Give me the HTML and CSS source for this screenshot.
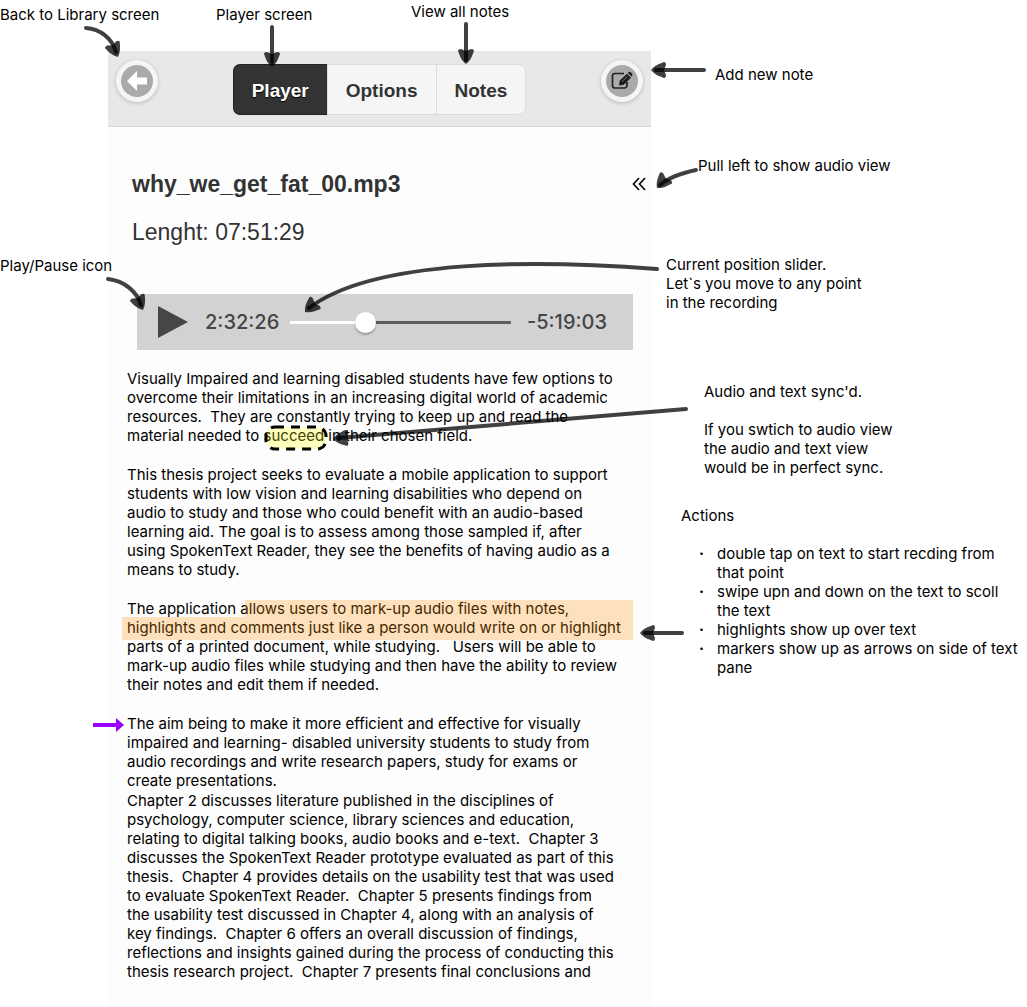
FILE: index.html
```html
<!DOCTYPE html>
<html lang="en">
<head>
<meta charset="utf-8">
<title>SpokenText Reader – Player</title>
<link rel="stylesheet" href="styles.css">
</head>
<body>
<div class="sheet">
  <div class="top-notes">
    <p class="top-note">Back to Library screen</p>
    <p class="top-note">Player screen</p>
    <p class="top-note top-note-high">View all notes</p>
  </div>

  <div class="board">
    <aside class="left-notes"><p>Play/Pause icon</p></aside>

    <main class="panel">
      <header class="bar">
        <button class="round" type="button" aria-label="Back to Library">
          <svg width="32" height="32" viewBox="0 0 32 32"><circle cx="16" cy="16" r="16" fill="#aaa"/><path d="M6 16 16 6v6.500h10v7H16V26z" fill="#fff"/></svg>
        </button>
        <nav class="tabs">
          <button class="tab tab-active" type="button">Player</button>
          <button class="tab" type="button">Options</button>
          <button class="tab" type="button">Notes</button>
        </nav>
        <button class="round" type="button" aria-label="Add new note">
          <svg width="32" height="32" viewBox="0 0 32 32"><circle cx="16" cy="16" r="16" fill="#aaa"/><path d="M18 8.500H9a2.500 2.500 0 0 0-2.500 2.500v9.500A2.500 2.500 0 0 0 9 23h9.500a2.500 2.500 0 0 0 2.500-2.500V17" fill="none" stroke="#222" stroke-width="1.700"/><path d="M13 20.500l.8-5L21 8.800l4 4-7.200 6.900zM21.800 8l1-.9q1-.6 1.900.2l1.500 1.500q.7 1 0 1.800l-.8.900z" fill="#1c1c1c"/><path d="M16 16.500l5.500-5" stroke="#888" stroke-width=".8"/></svg>
        </button>
      </header>

      <section class="file">
        <div class="file-row">
          <h1>why_we_get_fat_00.mp3</h1>
          <button class="pull" type="button" aria-label="Show audio view">
            <svg width="14" height="14" viewBox="0 0 14 14" fill="none" stroke="#000" stroke-width="1.600"><path d="M7 1 1.500 7 7 13M13 1 7.500 7l5.500 6"/></svg>
          </button>
        </div>
        <p class="length">Lenght: 07:51:29</p>
      </section>

      <section class="audio">
        <button class="play" type="button" aria-label="Play">
          <svg width="30" height="32" viewBox="0 0 30 32"><path d="M0 0 30 16 0 32z" fill="#464646"/></svg>
        </button>
        <span class="time">2:32:26</span>
        <input class="seek" type="range" min="0" max="1000" value="322" aria-label="Current position">
        <span class="time">-5:19:03</span>
      </section>

      <article class="text">
        <p>Visually Impaired and learning disabled students have few options to<br>
        overcome their limitations in an increasing digital world of academic<br>
        resources.&nbsp; They are constantly trying to keep up and read the<br>
        material needed to <span class="word">succeed<svg class="ring" width="64" height="26" viewBox="0 0 64 26"><rect x="2" y="2" width="60" height="22" rx="9" fill="#ff0" fill-opacity=".25" stroke="#000" stroke-width="3" stroke-dasharray="9 7"/></svg></span> in their chosen field.</p>
        <p>This thesis project seeks to evaluate a mobile application to support<br>
        students with low vision and learning disabilities who depend on<br>
        audio to study and those who could benefit with an audio-based<br>
        learning aid. The goal is to assess among those sampled if, after<br>
        using SpokenText Reader, they see the benefits of having audio as a<br>
        means to study.</p>
        <p class="marked">The application allows users to mark-up audio files with notes,<br>
        highlights and comments just like a person would write on or highlight<br>
        parts of a printed document, while studying.&nbsp;&nbsp; Users will be able to<br>
        mark-up audio files while studying and then have the ability to review<br>
        their notes and edit them if needed.</p>
        <p class="flagged"><svg class="flag" width="31" height="14" viewBox="0 0 31 14"><path d="M0 5h23V0l8 7-8 7V9H0z" fill="#90f"/></svg>The aim being to make it more efficient and effective for visually<br>
        impaired and learning- disabled university students to study from<br>
        audio recordings and write research papers, study for exams or<br>
        create presentations.</p>
        <p class="next">Chapter 2 discusses literature published in the disciplines of<br>
        psychology, computer science, library sciences and education,<br>
        relating to digital talking books, audio books and e-text.&nbsp; Chapter 3<br>
        discusses the SpokenText Reader prototype evaluated as part of this<br>
        thesis.&nbsp; Chapter 4 provides details on the usability test that was used<br>
        to evaluate SpokenText Reader.&nbsp; Chapter 5 presents findings from<br>
        the usability test discussed in Chapter 4, along with an analysis of<br>
        key findings.&nbsp; Chapter 6 offers an overall discussion of findings,<br>
        reflections and insights gained during the process of conducting this<br>
        thesis research project.&nbsp; Chapter 7 presents final conclusions and</p>
      </article>
    </main>

    <aside class="right-notes">
      <p class="note-add">Add new note</p>
      <p class="note-pull">Pull left to show audio view</p>
      <p class="note-slider">Current position slider.<br>Let`s you move to any point<br>in the recording</p>
      <div class="note-sync">
        <p>Audio and text sync'd.</p>
        <p>If you swtich to audio view<br>the audio and text view<br>would be in perfect sync.</p>
      </div>
      <div class="note-actions">
        <p>Actions</p>
        <ul>
          <li>double tap on text to start recding from<br>that point</li>
          <li>swipe upn and down on the text to scoll<br>the text</li>
          <li>highlights show up over text</li>
          <li>markers show up as arrows on side of text<br>pane</li>
        </ul>
      </div>
    </aside>
  </div>

  <svg class="arrows" width="1027" height="700" viewBox="0 0 1027 700" aria-hidden="true">
    <defs><path id="head" d="M0 0C-4-5-8-6-13-8q-2 0-2 3l2 5-2 5q0 3 2 3C-8 6-4 5 0 0z"/></defs>
    <g fill="none" stroke="#000" stroke-opacity=".75" stroke-width="4" stroke-linecap="round">
      <path d="M86 28C100 29 112 38 116 52"/>
      <path d="M272 27V62"/>
      <path d="M466 24V60"/>
      <path d="M704 70H656"/>
      <path d="M696 170C682 173 668 178 660 185"/>
      <path d="M108 279C125 281 137 292 141 305"/>
      <path d="M657 269C540 260 375 258 309 308"/>
      <path d="M686 409 338 438"/>
      <path d="M682 633H645"/>
    </g>
    <g fill="#000" fill-opacity=".75">
      <use href="#head" transform="translate(118 57) rotate(65)"/>
      <use href="#head" transform="translate(272 67) rotate(90)"/>
      <use href="#head" transform="translate(466 64) rotate(90)"/>
      <use href="#head" transform="translate(651 70) rotate(180)"/>
      <use href="#head" transform="translate(657 188) rotate(132)"/>
      <use href="#head" transform="translate(143 310) rotate(65)"/>
      <use href="#head" transform="translate(305 312) rotate(138)"/>
      <use href="#head" transform="translate(333 439) rotate(175)"/>
      <use href="#head" transform="translate(640 633) rotate(180)"/>
    </g>
  </svg>
</div>
</body>
</html>
```
FILE: styles.css
```css
* { box-sizing: border-box; }

body {
  margin: 0;
  background: #fff;
  color: #000;
  font: 15px/19px Inter, "Open Sans", sans-serif;
}

p, h1, ul { margin: 0; padding: 0; }

button {
  margin: 0;
  padding: 0;
  border: 0;
  background: none;
  font: inherit;
  color: inherit;
}

svg { display: block; }

.sheet {
  position: relative;
  display: flex;
  flex-direction: column;
  min-height: 100vh;
  overflow: hidden;
}

.top-notes {
  display: grid;
  grid-template-columns: 216px 195px 1fr;
  height: 51px;
  padding-top: 5px;
}

.top-note-high { margin-top: -3px; }

.board {
  display: grid;
  grid-template-columns: 108px minmax(0, 543fr) minmax(0, 376fr);
  flex: 1;
}

.left-notes {
  z-index: 1;
  padding-top: 205px;
  white-space: nowrap;
}

.panel {
  background: #fdfdfd;
  padding-bottom: 24px;
}

.bar {
  display: flex;
  align-items: flex-start;
  justify-content: space-between;
  height: 76px;
  padding: 9px 8px;
  background: #e8e8e8;
  border-bottom: 1px solid #d8d8d8;
}

.round {
  padding: 4px;
  border: 1px solid #f5f5f5;
  border-radius: 50%;
  background: #f5f5f5;
  box-shadow: 0 1px 4px rgba(0, 0, 0, .2);
}

.tabs {
  display: flex;
  margin-top: 4px;
  border-radius: 7px;
}

.tab {
  height: 51px;
  padding: 0 18px;
  border: 1px solid #dcdcdc;
  border-right-width: 0;
  background: #f5f5f5;
  color: #333;
  font: bold 19px/51px "Liberation Sans", Arial, sans-serif;
  text-shadow: 0 1px 0 #f3f3f3;
}

.tab:last-child {
  border-right-width: 1px;
  border-radius: 0 7px 7px 0;
}

.tab-active {
  border-color: #222;
  border-radius: 7px 0 0 7px;
  background: #333;
  color: #fff;
  text-shadow: 0 1px 1px #000;
}

.file {
  padding: 43px 5px 0 24px;
  color: #333;
  font: 23px/28px "Liberation Sans", Arial, sans-serif;
}

.file-row {
  display: flex;
  align-items: center;
  justify-content: space-between;
}

.file h1 { font: inherit; font-weight: bold; }

.length { margin-top: 20px; }

.audio {
  display: flex;
  align-items: center;
  height: 56px;
  margin: 48px 18px 0 29px;
  padding: 0 26px 0 21px;
  background: #d2d2d2;
}

.time {
  color: #464646;
  font: 500 20px/24px Inter, sans-serif;
}

.play { margin-right: 17px; }

.seek {
  flex: 1;
  min-width: 0;
  height: 24px;
  margin: 0 16px 0 11px;
  appearance: none;
  background: linear-gradient(90deg, #fff 34%, #5c5c5c 34%) center / 100% 3px no-repeat;
}

.seek::-webkit-slider-thumb {
  appearance: none;
  width: 21px;
  height: 21px;
  border-radius: 50%;
  background: #fff;
  box-shadow: 0 2px 2px rgba(0, 0, 0, .25);
}

.text {
  display: flex;
  flex-direction: column;
  gap: 20px;
  padding: 19px 0 0 19px;
  white-space: nowrap;
}

.text .next { margin-top: -19px; }

.word, .marked, .flagged { position: relative; }

.ring {
  position: absolute;
  top: -1px;
  left: 0;
}

/* Translucent highlighter strips laid over the first two lines */
.marked::before, .marked::after {
  content: "";
  position: absolute;
  right: 18px;
  background: rgba(255, 143, 0, .25);
}

.marked::before {
  top: 1px;
  left: 118px;
  height: 17px;
}

.marked::after {
  top: 18px;
  left: -5px;
  height: 23px;
}

.flag {
  position: absolute;
  top: 4px;
  left: -34px;
}

.right-notes { white-space: nowrap; }

.note-add { padding: 14px 0 0 64px; }

.note-pull { padding: 72px 0 0 47px; }

.note-slider { padding: 80px 0 0 15px; }

.note-sync {
  display: grid;
  gap: 19px;
  padding: 70px 0 0 53px;
}

.note-actions {
  display: grid;
  gap: 19px;
  padding: 29px 0 0 30px;
}

.note-actions ul {
  padding-left: 36px;
  list-style: none;
}

.note-actions li { position: relative; }

.note-actions li::before {
  content: "·";
  position: absolute;
  left: -18px;
  font-weight: bold;
}

.arrows {
  position: absolute;
  top: 0;
  left: 0;
  pointer-events: none;
}
```
